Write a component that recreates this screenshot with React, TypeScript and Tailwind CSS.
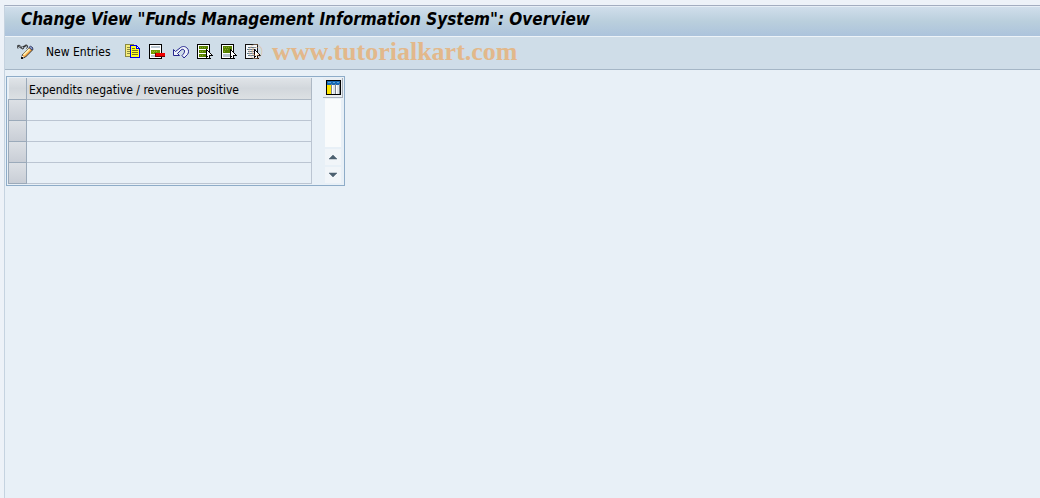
import { useState, type ReactNode } from "react";

const ROWS = [0, 1, 2, 3];

function Icon({ children }: { children: ReactNode }) {
  return (
    <svg width="16" height="16" viewBox="0 0 16 16" shapeRendering="crispEdges" aria-hidden="true">
      {children}
    </svg>
  );
}

// Mouse pointer shared by the three selection icons
function Pointer() {
  return (
    <>
      <path d="M9 5h1v1h1v1h1v1h1v1h1v1h1v1h1v1h-3v2h1v1h-3v-2h-1v1H9z" fill="#000" />
      <path d="M10 7h1v1h1v1h1v1h1v1h-2v3h-1v-2h-1z" fill="#fff" />
    </>
  );
}

function PencilIcon() {
  return (
    <svg width="17" height="16" viewBox="0 0 17 16" aria-hidden="true">
      <path d="M1 4.500C-.5 1 2.500.5 4 2.500s1 3 2 2.500 1-4 3-4 2 2 .500 3.500M.5 1.500l4 3M5.500 2.500l4-.5" fill="none" stroke="#222" />
      <path d="M4.500 14.500l1-4L13 3l3 2.500-7.500 7.500z" fill="#f9a840" stroke="#333" />
      <path d="M6.500 11l6-6" stroke="#ffeeb0" strokeWidth="2" />
      <path d="M12 3.500l1.500-1.500 2.500 2-1 2z" fill="#8da0d0" stroke="#39436c" />
      <path d="M5 11.500l2 1.500-2.500 1.500z" fill="#fff" />
      <path d="M4 13h2v2H4z" fill="#111" />
    </svg>
  );
}

function CopyIcon() {
  return (
    <Icon>
      <path d="M0 0h9v13H0z" fill="#8a8a42" />
      <path d="M1 1h7v11H1z" fill="#f8ee7c" />
      <path d="M2 3h3v1H2zM2 5h3v1H2zM2 7h3v1H2zM2 9h3v1H2z" fill="#8a8a42" />
      <path d="M5 1h7v1h1v1h1v1h1v10H5z" fill="#0000e8" />
      <path d="M6 2h5v3h3v8H6z" fill="#ffff20" />
      <path d="M12 3h1v1h-1z" fill="#fff" />
      <path d="M7 4h3v1H7zM7 6h6v1H7zM7 8h6v1H7zM7 10h6v1H7z" fill="#77771c" />
    </Icon>
  );
}

function DeleteIcon() {
  return (
    <Icon>
      <path d="M0 0h13v15H0z" fill="#000" />
      <path d="M1 1h11v13H1z" fill="#fff" />
      <path d="M2 2h9v2H2zM2 11h9v2H2z" fill="#bcc8d2" />
      <path d="M2 6h9v4H2z" fill="#709600" />
      <path d="M3 7h1v1H3zM5 7h1v1H5zM7 7h1v1H7zM4 8h1v1H4z" fill="#9abe24" />
      <path d="M6 9h10v4H6z" fill="#700000" />
      <path d="M7 9h9v3H7z" fill="#f00000" />
    </Icon>
  );
}

function UndoIcon() {
  return (
    <svg width="16" height="16" viewBox="0 0 16 16" aria-hidden="true">
      <path
        d="M.5 5.500v6h6L4.500 9.500 8 6c1.500-1.500 3.500-.5 3.500 1s-.5 2.500-2.500 4.500l2 2.500 3.500-3.500c1.500-2 1.500-4.500-.500-6.500s-5-2-7 0L2.500 7.500z"
        fill="#eef2f9"
        stroke="#26268f"
      />
    </svg>
  );
}

function SelectAllIcon() {
  return (
    <Icon>
      <path d="M0 0h13v15H0z" fill="#000" />
      <path d="M1 1h11v13H1z" fill="#fff" />
      <path d="M2 2h9v3H2zM2 6h9v3H2zM2 10h9v3H2z" fill="#568000" />
      <path d="M3 3h1v1H3zM5 3h1v1H5zM7 3h1v1H7zM3 7h1v1H3zM5 7h1v1H5zM3 11h1v1H3zM5 11h1v1H5z" fill="#85aa28" />
      <Pointer />
    </Icon>
  );
}

function SelectBlockIcon() {
  return (
    <Icon>
      <path d="M0 0h13v15H0z" fill="#000" />
      <path d="M1 1h11v13H1z" fill="#fff" />
      <path d="M2 2h9v7H2z" fill="#568000" />
      <path d="M3 3h1v1H3zM5 3h1v1H5zM7 3h1v1H7zM4 5h1v1H4zM6 5h1v1H6zM3 7h1v1H3z" fill="#85aa28" />
      <path d="M2 10h8v3H2z" fill="#b9c5d0" />
      <Pointer />
    </Icon>
  );
}

function DeselectAllIcon() {
  return (
    <Icon>
      <path d="M0 0h13v15H0z" fill="#111" />
      <path d="M1 1h11v13H1z" fill="#f4f7fa" />
      <path d="M3 3h8v1H3zM2 5h9v1H2zM3 7h6v1H3zM2 9h7v1H2zM3 11h6v1H3z" fill="#607990" />
      <Pointer />
    </Icon>
  );
}

function ConfigIcon() {
  return (
    <svg width="15" height="15" viewBox="0 0 15 15" shapeRendering="crispEdges" aria-hidden="true">
      <path d="M0 0h15v15H0z" fill="#000" />
      <path d="M1 1h13v13H1z" fill="#fff" />
      <path d="M1 1h13v4H1z" fill="#1668b4" />
      <path d="M2 2h3v1H2zM7 2h2v1H7zM11 2h2v1h-2z" fill="#5ba4dd" />
      <path d="M1 5h4v9H1z" fill="#ffe500" />
      <path d="M5 4h1v10H5zM9 4h1v10H9zM13 4h1v10h-1z" fill="#7d858c" />
      <path d="M7 5h2v9H7zM11 5h2v9h-2z" fill="#dfe4e8" />
    </svg>
  );
}

const TOOLS = [
  { label: "Copy As", icon: <CopyIcon /> },
  { label: "Delete", icon: <DeleteIcon /> },
  { label: "Undo Change", icon: <UndoIcon /> },
  { label: "Select All", icon: <SelectAllIcon /> },
  { label: "Select Block", icon: <SelectBlockIcon /> },
  { label: "Deselect All", icon: <DeselectAllIcon /> },
];

function Toolbar() {
  return (
    <div className="relative flex h-[34px] items-center border-t border-b border-t-[#edf3f8] border-b-[#a5b6c6] bg-[#cfdde8] pb-[2px] pl-3">
      <button type="button" aria-label="Display / Change" className="shrink-0">
        <PencilIcon />
      </button>
      <button type="button" className="ml-3 shrink-0 whitespace-nowrap">
        New Entries
      </button>
      <div className="ml-[14px] flex shrink-0 gap-2">
        {TOOLS.map((tool) => (
          <button key={tool.label} type="button" aria-label={tool.label} className="w-4">
            {tool.icon}
          </button>
        ))}
      </div>
      <span className="pointer-events-none absolute left-[243px] flex items-center font-['Liberation_Serif',serif] leading-8 text-[#e2b88b]">
        <span className="w-6 text-xl opacity-70">©</span>
        <span className="text-[26px] font-bold">www.tutorialkart.com</span>
      </span>
    </div>
  );
}

function EntriesTable() {
  const [selected, setSelected] = useState<number | null>(null);

  return (
    <div className="mt-[6px] ml-px flex w-[339px] justify-between border border-[#8eacc8] p-px">
      <table className="w-[304px] table-fixed border-collapse">
        <thead>
          <tr className="h-[21px] bg-linear-to-b from-[#e0e4e8] via-[#d2d7dc] to-[#dce0e3]">
            <th className="w-[18px] border-r border-b border-[#9baaba] p-0" aria-label="Row selection" />
            <th className="border-r border-b border-[#adb8c4] p-0 pt-[3px] pl-[2px] text-left font-normal whitespace-nowrap">
              Expendits negative / revenues positive
            </th>
          </tr>
        </thead>
        <tbody>
          {ROWS.map((row) => (
            <tr key={row} className="h-[21px]">
              <td className="border border-[#9baaba] p-0">
                <button
                  type="button"
                  aria-label={`Select row ${row + 1}`}
                  onClick={() => setSelected(row)}
                  className={`block h-5 w-full ${
                    selected === row ? "bg-[#f5c56b]" : "bg-linear-to-b from-[#dce0e5] to-[#c9ced6]"
                  }`}
                />
              </td>
              <td className="border-r border-b border-[#bbc5d2] p-0" />
            </tr>
          ))}
        </tbody>
      </table>
      <div className="flex w-5 flex-col items-center pb-px">
        <button
          type="button"
          aria-label="Configuration"
          className="flex h-5 w-full items-center justify-end border-r border-b border-[#a9b1ba] bg-[#e9edf1] pr-px"
        >
          <ConfigIcon />
        </button>
        <div className="mt-px w-4 flex-1 bg-[#f9fbfc]" />
        <button type="button" aria-label="Scroll up" className="mt-[2px] flex h-4 w-4 items-center justify-center bg-[#f1f5f9]">
          <svg width="10" height="6" viewBox="0 0 10 6">
            <path d="M1 5L5 1l4 4z" fill="#4c6070" stroke="#4c6070" strokeWidth=".5" />
          </svg>
        </button>
        <button type="button" aria-label="Scroll down" className="mt-[2px] flex h-4 w-4 items-center justify-center bg-[#f1f5f9]">
          <svg width="10" height="6" viewBox="0 0 10 6">
            <path d="M1 1h8L5 5z" fill="#4c6070" stroke="#4c6070" strokeWidth=".5" />
          </svg>
        </button>
      </div>
    </div>
  );
}

export default function App() {
  return (
    <div className="flex min-h-screen flex-col bg-[#edf2f8] pt-[5px] pl-1 font-['DejaVu_Sans_Condensed','DejaVu_Sans',sans-serif] text-[12px] leading-4 text-black">
      <main className="flex-1 border-t border-l border-t-[#a3adc0] border-l-[#c5d3e0] bg-[#e8f0f7]">
        <header className="h-[30px] border-t border-[#e6eef6] bg-linear-to-b from-[#d0deeb] via-[#bacfdd] to-[#acc3dc] pl-4">
          <h1 className="text-[17px] leading-6 font-bold whitespace-nowrap italic">
            Change View "Funds Management Information System": Overview
          </h1>
        </header>
        <Toolbar />
        <EntriesTable />
      </main>
    </div>
  );
}
